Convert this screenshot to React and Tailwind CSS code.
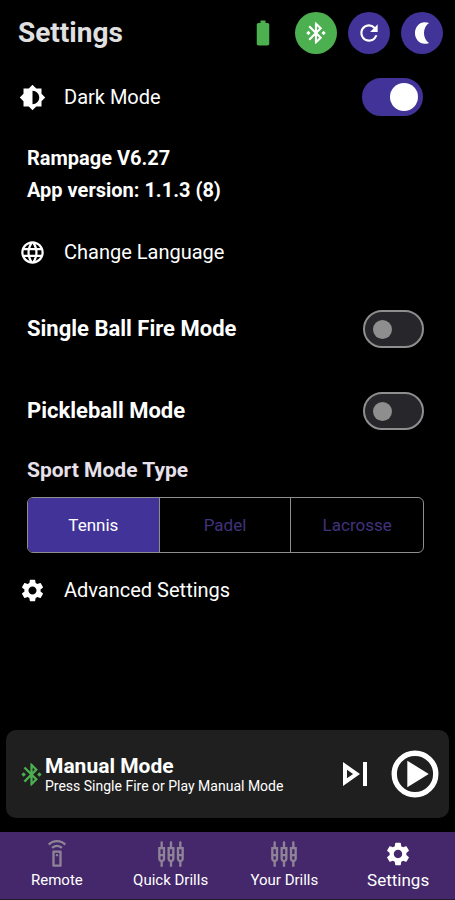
import { useState } from 'react';
import {
  MdBatteryFull,
  MdBluetoothConnected,
  MdBrightness6,
  MdLanguage,
  MdOutlineSettingsInputComponent,
  MdOutlineSettingsRemote,
  MdOutlineSkipNext,
  MdRefresh,
  MdSettings,
} from 'react-icons/md';

const sports = ['Tennis', 'Padel', 'Lacrosse'];

const tabs = [
  { name: 'Remote', Icon: MdOutlineSettingsRemote },
  { name: 'Quick Drills', Icon: MdOutlineSettingsInputComponent },
  { name: 'Your Drills', Icon: MdOutlineSettingsInputComponent },
  { name: 'Settings', Icon: MdSettings },
];

const MoonIcon = () => (
  <svg className="size-[26px] fill-current" viewBox="0 0 24 24" aria-hidden="true">
    <path d="M14.5 2c1.4 0 2.7.3 4 .8-2.9 1.9-4.7 5.3-4.7 9.2s1.8 7.3 4.7 9.2c-1.3.5-2.6.8-4 .8C9.500 22 5.500 17.500 5.500 12S9.500 2 14.500 2z" />
  </svg>
);

const PlayIcon = () => (
  <svg className="size-14" viewBox="0 0 24 24" aria-hidden="true">
    <circle cx="12" cy="12" r="8.900" fill="none" stroke="currentColor" strokeWidth="2.300" />
    <path d="M8.700 6.300v11.400L17.900 12z" fill="currentColor" />
  </svg>
);

const RoundButton = ({ label, className, children }) => (
  <button
    type="button"
    aria-label={label}
    className={`flex size-[42px] items-center justify-center rounded-full text-white ${className}`}
  >
    {children}
  </button>
);

// Thumb grows and slides to the right when checked
const Switch = ({ id, checked, onChange }) => (
  <input
    id={id}
    type="checkbox"
    role="switch"
    checked={checked}
    onChange={(e) => onChange(e.target.checked)}
    className="flex h-[38px] w-[61px] shrink-0 cursor-pointer appearance-none items-center rounded-full border-2 border-[#8e8e8e] bg-[#27262b] px-2 before:size-[19px] before:rounded-full before:bg-[#8e8e8e] checked:justify-end checked:border-[#413397] checked:bg-[#413397] checked:px-[3px] checked:before:size-7 checked:before:bg-white"
  />
);

export default function App() {
  const [darkMode, setDarkMode] = useState(true);
  const [singleBall, setSingleBall] = useState(false);
  const [pickleball, setPickleball] = useState(false);
  const [sport, setSport] = useState('Tennis');
  const [tab, setTab] = useState('Settings');

  return (
    <div className="flex min-h-screen flex-col bg-black font-['Roboto',sans-serif] text-white">
      <header className="flex items-center pt-3 pr-3 pl-[18px]">
        <h1 className="text-[28px] leading-10 font-bold text-[#e0e0e0]">Settings</h1>
        <div className="ml-auto flex items-center gap-[11px]">
          <MdBatteryFull className="mr-[6px] size-[30px] text-[#4caf50]" />
          <RoundButton label="Bluetooth" className="bg-[#4caf50]">
            <MdBluetoothConnected className="size-[26px]" />
          </RoundButton>
          <RoundButton label="Refresh" className="bg-[#413397]">
            <MdRefresh className="size-[26px]" />
          </RoundButton>
          <RoundButton label="Night mode" className="bg-[#413397]">
            <MoonIcon />
          </RoundButton>
        </div>
      </header>

      <main className="mb-6">
        <div className="mt-4 flex h-[54px] items-center pr-8 pl-[19px]">
          <MdBrightness6 className="mr-[18px] size-[27px]" />
          <label htmlFor="dark-mode" className="text-[20px] leading-6">Dark Mode</label>
          <div className="ml-auto flex">
            <Switch id="dark-mode" checked={darkMode} onChange={setDarkMode} />
          </div>
        </div>

        <div className="mt-[18px] px-[27px] text-[20px] leading-8 font-bold">
          <p>Rampage V6.27</p>
          <p>App version: 1.1.3 (8)</p>
        </div>

        <button type="button" className="mt-[19px] flex h-[54px] w-full items-center pl-[19px]">
          <MdLanguage className="mr-[18px] size-[27px]" />
          <span className="text-[20px] leading-6">Change Language</span>
        </button>

        <div className="mt-[23px] flex h-[54px] items-center justify-between pr-[31px] pl-[27px]">
          <label htmlFor="single-ball" className="text-[22px] leading-7 font-bold">Single Ball Fire Mode</label>
          <Switch id="single-ball" checked={singleBall} onChange={setSingleBall} />
        </div>

        <div className="mt-7 flex h-[54px] items-center justify-between pr-[31px] pl-[27px]">
          <label htmlFor="pickleball" className="text-[22px] leading-7 font-bold">Pickleball Mode</label>
          <Switch id="pickleball" checked={pickleball} onChange={setPickleball} />
        </div>

        <fieldset className="mt-[18px] pr-[31px] pl-[27px]">
          <legend className="text-[21px] leading-7 font-bold text-[#e6e1ea]">Sport Mode Type</legend>
          <div className="mt-[13px] grid h-14 grid-cols-3 divide-x divide-[#8e8e8e] overflow-hidden rounded-md border border-[#8e8e8e]">
            {sports.map((name) => (
              <label
                key={name}
                className="flex cursor-pointer items-center justify-center text-[17px] leading-6 text-[#41327d] has-checked:bg-[#413397] has-checked:text-white"
              >
                <input
                  type="radio"
                  name="sport"
                  value={name}
                  checked={sport === name}
                  onChange={() => setSport(name)}
                  className="sr-only"
                />
                {name}
              </label>
            ))}
          </div>
        </fieldset>

        <button type="button" className="mt-[10px] flex h-[54px] w-full items-center pl-[19px]">
          <MdSettings className="mr-[18px] size-[27px]" />
          <span className="text-[20px] leading-6">Advanced Settings</span>
        </button>
      </main>

      <section className="mx-[6px] mt-auto mb-[14px] flex h-[88px] items-center rounded-[10px] bg-[#1f1f1f] pr-[6px] pl-3">
        <MdBluetoothConnected className="size-[27px] shrink-0 text-[#4caf50]" />
        <div className="min-w-0 flex-1">
          <h2 className="text-[21px] leading-6 font-bold">Manual Mode</h2>
          <p className="text-[14px] leading-4">Press Single Fire or Play Manual Mode</p>
        </div>
        <button type="button" aria-label="Single fire" className="mr-2">
          <MdOutlineSkipNext className="size-12" />
        </button>
        <button type="button" aria-label="Play">
          <PlayIcon />
        </button>
      </section>

      <nav className="grid h-[68px] grid-cols-4 border-b border-[#211b2a] bg-[#45286b]">
        {tabs.map(({ name, Icon }) => {
          const active = tab === name;
          return (
            <button
              key={name}
              type="button"
              aria-current={active ? 'page' : undefined}
              onClick={() => setTab(name)}
              className="flex flex-col items-center pt-2"
            >
              <Icon className={`size-7 ${active ? 'text-white' : 'text-[#8f8398]'}`} />
              <span className={active ? 'text-[17px] leading-6' : 'text-[15px] leading-6'}>{name}</span>
            </button>
          );
        })}
      </nav>
    </div>
  );
}
